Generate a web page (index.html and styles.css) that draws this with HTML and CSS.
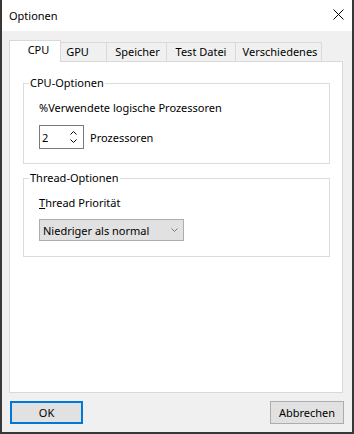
FILE: index.html
```html
<!DOCTYPE html>
<html lang="de">
<head>
<meta charset="utf-8">
<title>Optionen</title>
<link rel="stylesheet" href="styles.css">
</head>
<body>
<div class="window">
  <div class="titlebar">
    <span class="title">Optionen</span>
    <svg class="close" width="11" height="11" viewBox="0 0 11 11"><path d="M0.5 0.5 L10.5 10.5 M10.5 0.5 L0.5 10.5" stroke="#000" stroke-width="1" fill="none"/></svg>
  </div>
  <div class="content">
    <div class="tabs">
      <div class="tab active tab-cpu">CPU</div>
      <div class="tab tab-gpu">GPU</div>
      <div class="tab tab-mem">Speicher</div>
      <div class="tab tab-test">Test Datei</div>
      <div class="tab tab-misc">Verschiedenes</div>
    </div>
    <div class="panel">
      <fieldset class="group">
        <legend>CPU-Optionen</legend>
        <div class="group-body g-cpu">
          <div class="label">%Verwendete logische Prozessoren</div>
          <div class="spin-row">
            <div class="spin">
              <span>2</span>
              <svg width="7" height="14" viewBox="0 0 7 14"><path d="M0.5 4.5 L3.5 1.5 L6.5 4.5 M0.5 9.5 L3.5 12.5 L6.5 9.5" stroke="#000" stroke-width="1" fill="none"/></svg>
            </div>
            <span class="unit">Prozessoren</span>
          </div>
        </div>
      </fieldset>
      <fieldset class="group group-thread">
        <legend>Thread-Optionen</legend>
        <div class="group-body g-thread">
          <div class="label"><span class="accel">T</span>hread Priorität</div>
          <div class="combo">
            <span>Niedriger als normal</span>
            <svg width="7" height="4" viewBox="0 0 7 4"><path d="M0.5 0.5 L3.5 3.5 L6.5 0.5" stroke="#7a7a7a" stroke-width="1" fill="none"/></svg>
          </div>
        </div>
      </fieldset>
    </div>
    <div class="footer">
      <button class="btn btn-default">OK</button>
      <button class="btn btn-cancel">Abbrechen</button>
    </div>
  </div>
</div>
</body>
</html>
```
FILE: styles.css
```css
html, body {
  margin: 0;
  padding: 0;
  background: #ffffff;
}
body {
  font-family: "Noto Sans", "DejaVu Sans", sans-serif;
  font-size: 11px;
  color: #000;
}
.window {
  width: 354px;
  height: 434px;
  box-sizing: border-box;
  border: 2px solid #383838;
  border-top: 0;
  display: flex;
  flex-direction: column;
  background: #f0f0f0;
}
.titlebar {
  height: 31px;
  flex: none;
  background: #fff;
  display: flex;
  align-items: center;
  justify-content: space-between;
  padding: 0 8px 0 7px;
}
.title {
  line-height: 16px;
}
.close {
  display: block;
  margin-bottom: 2px;
}
.content {
  flex: 1;
  display: flex;
  flex-direction: column;
  padding: 9px 9px 8px 7px;
  min-height: 0;
}
.tabs {
  display: flex;
  align-items: flex-end;
  height: 22px;
  flex: none;
}
.tab {
  box-sizing: border-box;
  height: 19px;
  margin-bottom: 1px;
  margin-left: -1px;
  border: 1px solid #d9d9d9;
  border-bottom: 0;
  background: #f0f0f0;
  line-height: 18px;
  text-align: center;
  white-space: nowrap;
}
.tab.active {
  position: relative;
  z-index: 1;
  height: 22px;
  margin-bottom: 0;
  margin-left: 0;
  background: #fff;
  line-height: 17px;
}
.tab-cpu { width: 52px; padding-left: 7px; }
.tab-gpu { width: 47px; padding-right: 12px; }
.tab-mem { width: 61px; padding-left: 2px; }
.tab-test { width: 70px; }
.tab-misc { width: 87px; padding-left: 3px; }
.panel {
  flex: 1;
  margin-top: -1px;
  background: #fff;
  border: 1px solid #d9d9d9;
  padding: 13px 12px 0 13px;
}
.group {
  margin: 0;
  padding: 0;
  border: 1px solid #dcdcdc;
  min-width: 0;
}
.group legend {
  margin-left: 5px;
  padding: 0 1px;
  line-height: 16px;
}
.group-thread {
  margin-top: 6px;
}
.group-body {
  padding: 9px 0 14px 15px;
}
.g-thread {
  padding-bottom: 15px;
}
.label {
  line-height: 16px;
}
.accel {
  text-decoration: underline;
  text-underline-offset: 1px;
}
.spin-row {
  display: flex;
  align-items: center;
  margin-top: 9px;
}
.spin {
  box-sizing: border-box;
  width: 45px;
  height: 24px;
  border: 1px solid #7a7a7a;
  background: #fff;
  display: flex;
  align-items: center;
  justify-content: space-between;
  padding: 0 6px 0 2px;
}
.spin svg {
  display: block;
}
.unit {
  margin-left: 6px;
}
.combo {
  box-sizing: border-box;
  margin-top: 8px;
  width: 145px;
  height: 22px;
  background: #e1e1e1;
  border: 1px solid #adadad;
  display: flex;
  align-items: center;
  justify-content: space-between;
  padding: 0 5px 0 3px;
}
.combo svg {
  display: block;
}
.footer {
  flex: none;
  display: flex;
  justify-content: space-between;
  margin: 8px -1px 0 1px;
}
.btn {
  box-sizing: border-box;
  height: 23px;
  padding: 0;
  margin: 0;
  font: inherit;
  color: #000;
  background: #e1e1e1;
  border: 1px solid #adadad;
}
.btn-default {
  width: 73px;
  border: 2px solid #0078d7;
}
.btn-cancel {
  width: 74px;
}
```
